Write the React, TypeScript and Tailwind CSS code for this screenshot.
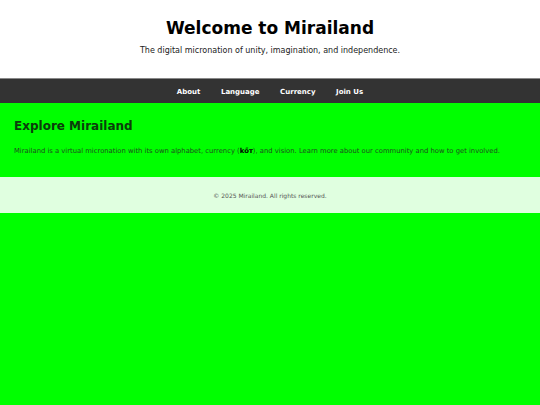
import React from 'react';

const App = () => {
  return (
    <div className="min-h-[405px] bg-[#00ff00] font-['DejaVu_Sans',sans-serif]">
      {/* Header */}
      <header className="h-[78px] bg-white pt-[18px] text-center">
        <h1 className="text-[17px] leading-[20px] font-bold text-black">Welcome to Mirailand</h1>
        <p className="mt-[8px] text-[8px] leading-[10px] text-[#222]">
          The digital micronation of unity, imagination, and independence.
        </p>
      </header>

      {/* Nav */}
      <nav className="h-[25px] bg-[#333] border-t border-[#888] pt-[2px] flex items-center justify-center gap-[20.5px]">
        <a className="text-[7px] leading-[9px] font-bold text-white">About</a>
        <a className="text-[7px] leading-[9px] font-bold text-white">Language</a>
        <a className="text-[7px] leading-[9px] font-bold text-white">Currency</a>
        <a className="text-[7px] leading-[9px] font-bold text-white">Join Us</a>
      </nav>

      {/* Main */}
      <main className="h-[74px] px-[14px] pt-[15px]">
        <h2 className="text-[12px] leading-[16px] font-bold text-[#0b3d0b]">Explore Mirailand</h2>
        <p className="mt-[12.5px] text-[6.8px] leading-[9px] text-[#1f4d1f]">
          Mirailand is a virtual micronation with its own alphabet, currency (<b className="text-black">kőт</b>), and vision. Learn more about our community and how to get involved.
        </p>
      </main>

      {/* Footer */}
      <footer className="h-[36px] bg-[#e0ffe0] flex items-center justify-center">
        <p className="text-[6px] text-[#555]">© 2025 Mirailand. All rights reserved.</p>
      </footer>
    </div>
  );
};

export default App;
